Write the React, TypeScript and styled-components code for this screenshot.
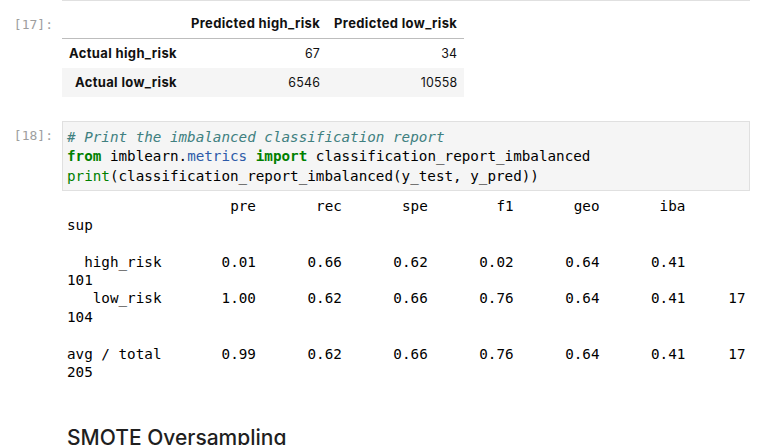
import React from "react";
import styled, { createGlobalStyle } from "styled-components";

const GlobalStyle = createGlobalStyle`
  html, body {
    margin: 0;
    padding: 0;
    background: #ffffff;
    overflow: hidden;
  }
`;

const headers = ["pre", "rec", "spe", "f1", "geo", "iba", "sup"];

const reportRows: [string, string[]][] = [
  ["high_risk", ["0.01", "0.66", "0.62", "0.02", "0.64", "0.41", "101"]],
  ["low_risk", ["1.00", "0.62", "0.66", "0.76", "0.64", "0.41", "17104"]],
];

const avgRow: [string, string[]] = [
  "avg / total",
  ["0.99", "0.62", "0.66", "0.76", "0.64", "0.41", "17205"],
];

const WRAP = 79;

const formatRow = (label: string, cells: string[]) =>
  label.padStart(11) + "  " + cells.map((c) => c.padStart(9)).join(" ");

const wrapLine = (line: string) => [line.slice(0, WRAP), line.slice(WRAP)];

const buildReport = () => {
  const lines: string[] = [];
  lines.push(...wrapLine(formatRow("", headers)));
  lines.push("");
  reportRows.forEach(([label, cells]) => lines.push(...wrapLine(formatRow(label, cells))));
  lines.push("");
  lines.push(...wrapLine(formatRow(avgRow[0], avgRow[1])));
  return lines.join("\n");
};

const App: React.FC = () => {
  return (
    <>
      <GlobalStyle />
      <Notebook>
        <PrevInput />

        <Cell $gap={8}>
          <OutputRow>
            <Prompt $top={8}>[17]:</Prompt>
            <DataFrame>
              <thead>
                <tr>
                  <th></th>
                  <th>Predicted high_risk</th>
                  <th>Predicted low_risk</th>
                </tr>
              </thead>
              <tbody>
                <tr>
                  <th>Actual high_risk</th>
                  <td>67</td>
                  <td>34</td>
                </tr>
                <tr>
                  <th>Actual low_risk</th>
                  <td>6546</td>
                  <td>10558</td>
                </tr>
              </tbody>
            </DataFrame>
          </OutputRow>
        </Cell>

        <Cell $gap={24}>
          <InputRow>
            <Prompt $top={7}>[18]:</Prompt>
            <CodeBox>
              <Comment># Print the imbalanced classification report</Comment>
              {"\n"}
              <Keyword>from</Keyword> imblearn.<Module>metrics</Module> <Keyword>import</Keyword>{" "}
              classification_report_imbalanced
              {"\n"}
              <Builtin>print</Builtin>(classification_report_imbalanced(y_test, y_pred))
            </CodeBox>
          </InputRow>
          <OutputRow>
            <Prompt $top={0} />
            <StreamOutput>{buildReport()}</StreamOutput>
          </OutputRow>
        </Cell>

        <MarkdownCell>
          <Heading>SMOTE Oversampling</Heading>
        </MarkdownCell>
      </Notebook>
    </>
  );
};

export default App;

const Notebook = styled.div`
  display: flex;
  flex-direction: column;
  width: 758px;
  height: 445px;
  padding-right: 8px;
  box-sizing: border-box;
`;

const PrevInput = styled.div`
  margin-left: 62px;
  height: 2px;
  background: #f7f7f7;
  border: 1px solid #e0e0e0;
  border-top: none;
`;

const Cell = styled.div<{ $gap?: number }>`
  display: flex;
  flex-direction: column;
  margin-top: ${(p) => p.$gap ?? 7}px;
`;

const OutputRow = styled.div`
  display: flex;
  align-items: flex-start;
`;

const InputRow = styled.div`
  display: flex;
  align-items: flex-start;
`;

const Prompt = styled.div<{ $top: number }>`
  flex: 0 0 62px;
  box-sizing: border-box;
  padding: ${(p) => p.$top}px 9px 0 0;
  text-align: right;
  font-family: "DejaVu Sans Mono", monospace;
  font-size: 13px;
  line-height: 16px;
  color: #9e9e9e;
`;

const DataFrame = styled.table`
  border-collapse: collapse;
  border-spacing: 0;
  font-family: Inter, "Liberation Sans", sans-serif;
  font-size: 13px;
  color: #111111;

  th,
  td {
    padding: 7px 7px;
    line-height: 15px;
    text-align: right;
    white-space: nowrap;
    vertical-align: middle;
  }

  th {
    font-weight: 700;
    letter-spacing: 0.35px;
  }

  td {
    font-size: 12.4px;
    font-weight: 400;
    letter-spacing: 0.2px;
  }

  thead tr {
    border-bottom: 1px solid #bdbdbd;
  }

  tbody tr:nth-child(even) {
    background: #f5f5f5;
  }
`;

const CodeBox = styled.pre`
  flex: 1;
  margin: 0;
  padding: 6px 4px 4px;
  background: #f5f5f5;
  border: 1px solid #e0e0e0;
  font-family: "DejaVu Sans Mono", monospace;
  font-size: 14.25px;
  line-height: 19.4px;
  color: #000000;
  white-space: pre;
  overflow: hidden;
`;

const Comment = styled.span`
  color: #408080;
  font-style: italic;
`;

const Keyword = styled.span`
  color: #008000;
  font-weight: 700;
`;

const Module = styled.span`
  color: #2c5aa8;
`;

const Builtin = styled.span`
  color: #008000;
`;

const StreamOutput = styled.pre`
  flex: 1;
  margin: 6px 0 0;
  padding: 0 5px;
  font-family: "DejaVu Sans Mono", monospace;
  font-size: 14.28px;
  line-height: 18.45px;
  color: #000000;
  white-space: pre;
  overflow: hidden;
`;

const MarkdownCell = styled.div`
  padding-left: 67px;
  margin-top: 43px;
`;

const Heading = styled.h2`
  margin: 0;
  font-family: Inter, "Liberation Sans", sans-serif;
  font-size: 21px;
  font-weight: 500;
  line-height: 26px;
  color: #1f1f1f;
`;
